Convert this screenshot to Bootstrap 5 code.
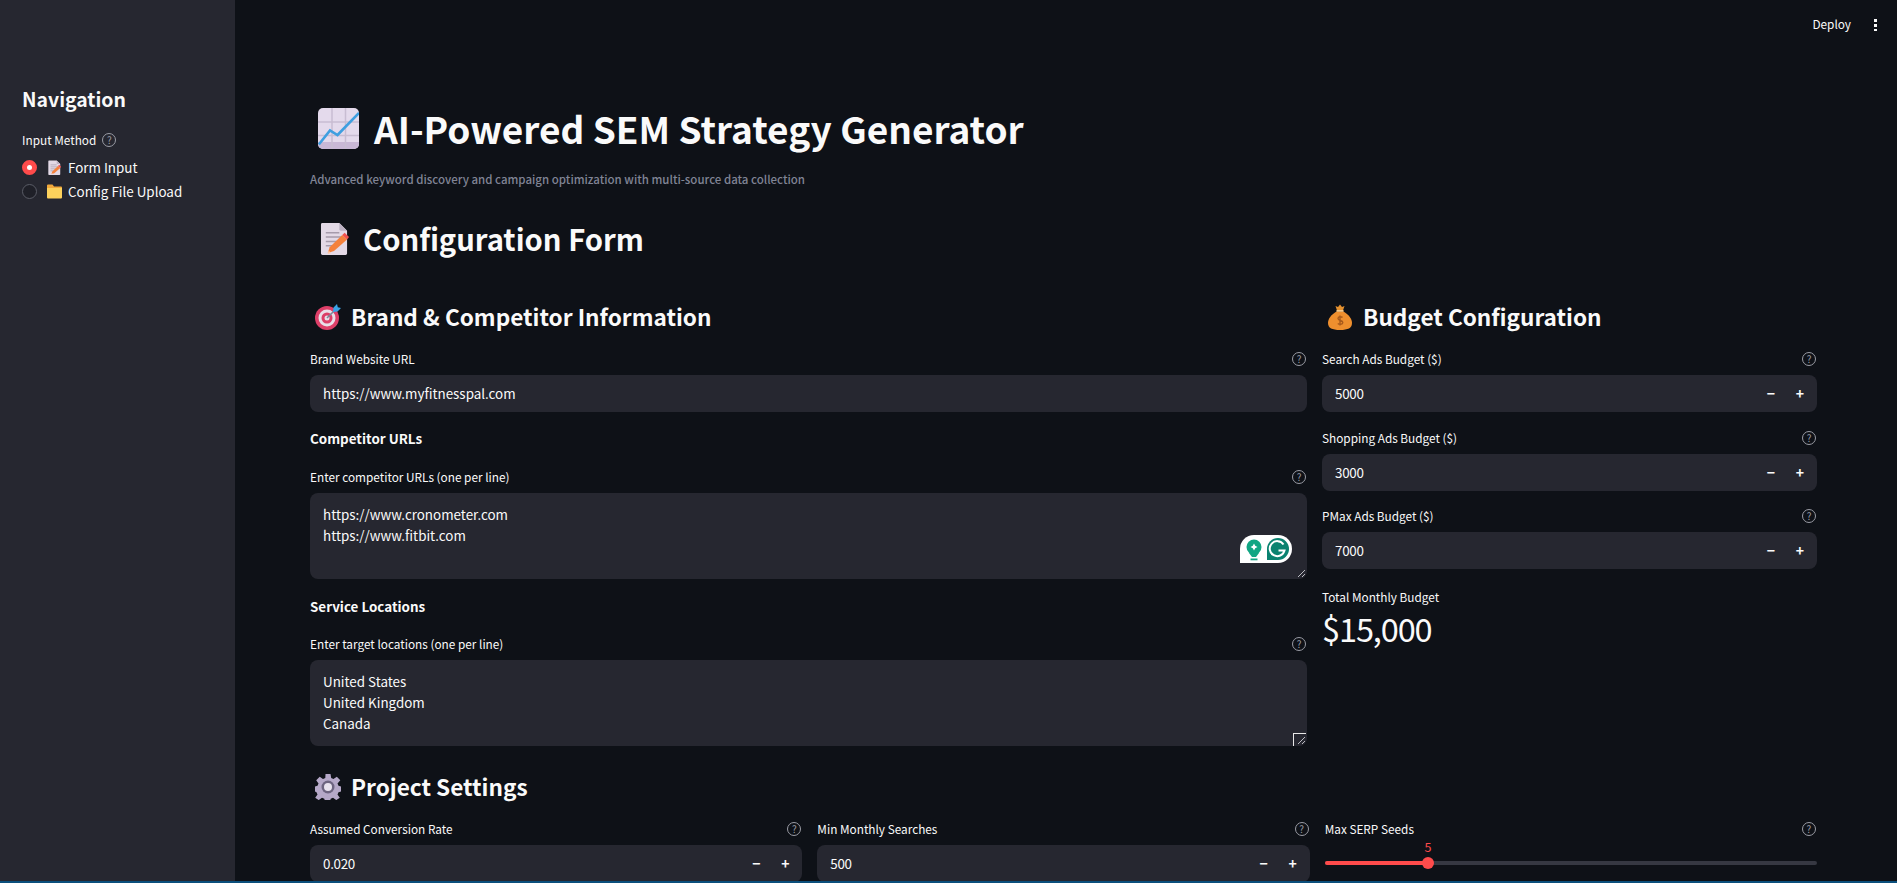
<!DOCTYPE html>
<html lang="en">
<head>
  <meta charset="UTF-8">
  <meta name="viewport" content="width=device-width, initial-scale=1">
  <title>AI-Powered SEM Strategy Generator</title>
  <link href="https://cdn.jsdelivr.net/npm/bootstrap@5.3.3/dist/css/bootstrap.min.css" rel="stylesheet">
  <style>
    html, body { height: 883px; overflow: hidden; }
    body {
      background: #0e1117;
      color: #fafafa;
      font-family: "Noto Sans CJK SC", "Noto Sans", sans-serif;
      font-size: 13.4px;
    }
    .app-shell { height: 881px; overflow: hidden; }
    .side-panel { width: 235px; background: #262730; padding: 85px 22px 0; flex: none; }
    .side-title { font-size: 19.4px; font-weight: 700; line-height: 28px; margin: 0 0 18px; }
    .side-label { font-size: 11.8px; line-height: 18px; margin-bottom: 6px; gap: 6px; }
    .radio-row { height: 24px; gap: 6px; font-size: 13.4px; }
    .radio-dot { width: 15px; height: 15px; border-radius: 50%; border: 1px solid #5a5c66; background: #1f2028; flex: none; }
    .radio-dot.is-on { background: #ff4b4b; border: 5px solid #ff4b4b; position: relative; }
    .radio-dot.is-on::after { content: ""; position: absolute; inset: 0; background: #fff; border-radius: 50%; }
    .radio-emoji { width: 15px; height: 15px; flex: none; }
    .main-panel { flex: 1; padding: 0 80px 0 75px; min-width: 0; position: relative; }
    .top-actions { position: absolute; top: 14px; right: 20px; gap: 23px; height: 20px; font-size: 11.8px; }
    .kebab { width: 3px; height: 13px; background: radial-gradient(circle, #fafafa 1.5px, transparent 1.7px) 0 0 / 3px 5px; }
    .page-title { font-size: 37px; font-weight: 700; line-height: 56px; margin: 100px 0 0 8px; gap: 15px; height: 56px; }
    .page-title svg { width: 41px; height: 41px; }
    .page-sub { color: #808495; font-size: 11.5px; font-weight: 500; line-height: 18px; margin: 14px 0 0; }
    .form-title { font-size: 29.2px; font-weight: 700; line-height: 44px; margin: 28px 0 0 10px; gap: 14px; }
    .form-title svg { width: 29px; height: 33px; }
    .sect-title { font-size: 22.6px; font-weight: 700; line-height: 34px; margin: 0 0 0 5px; gap: 10px; height: 34px; }
    .sect-title svg { width: 26px; height: 26px; }
    .cols-main { gap: 15px; margin-top: 40px; }
    .col-wide { width: 997px; flex: none; }
    .col-narrow { flex: 1; min-width: 0; }
    .cols-three { gap: 15px; margin-top: 16px; }
    .cols-three > div { flex: 1; min-width: 0; }
    .fld-label { font-size: 11.8px; line-height: 18px; height: 18px; margin-bottom: 7px; }
    .fld-first { margin-top: 16px; }
    .fld-gap16 { margin-top: 16px; }
    .fld-gap17 { margin-top: 17px; }
    .fld-gap19 { margin-top: 19px; }
    .fld-gap20 { margin-top: 20px; }
    .help-mark {
      width: 14px; height: 14px; border-radius: 50%; border: 1px solid #9a9ca5; color: #9a9ca5;
      font-size: 10px; line-height: 12px; text-align: center; flex: none; margin-right: 1px;
    }
    .form-control.dark-field, .form-control.dark-field:focus {
      background: #262730; color: #fafafa; border: 0; box-shadow: none; border-radius: 8px;
      font-size: 13.4px; height: 37px; padding: 0 13px 2px; font-family: inherit;
    }
    textarea.form-control.dark-field, textarea.form-control.dark-field:focus {
      height: 86px; line-height: 21px; padding: 11px 13px; resize: none; overflow: hidden; min-height: 0;
    }
    .stepper { background: #262730; border-radius: 8px; height: 37px; }
    .stepper .form-control.dark-field { background: transparent; letter-spacing: -.3px; }
    .step-btn { width: 30px; padding: 0; color: #fafafa; border: 0; font-size: 14px; font-weight: 700; line-height: 37px; flex: none; }
    .step-last { margin-right: 2px; }
    .bold-label { font-size: 13.4px; font-weight: 700; line-height: 20px; }
    .field-wrap { position: relative; }
    .gram-badge { position: absolute; left: 930px; bottom: 16px; width: 52px; height: 28px; }
    .grip { position: absolute; right: 2px; bottom: 2px; width: 8px; height: 8px; }
    .corner-mark { position: absolute; right: 1px; bottom: 0; width: 13px; height: 13px; border-left: 1px solid #e8e8e8; border-top: 1px solid #e8e8e8; }
    .metric-value { font-size: 32.5px; line-height: 44px; letter-spacing: -1.1px; }
    .slider-box { height: 37px; position: relative; }
    .slider-track { position: absolute; left: 0; right: 0; top: 16px; height: 4px; border-radius: 2px; background: #363842; }
    .slider-fill { position: absolute; left: 0; top: 16px; height: 4px; border-radius: 2px; background: #ff4b4b; }
    .slider-thumb { position: absolute; top: 12px; width: 12px; height: 12px; margin-left: -6px; border-radius: 50%; background: #ff4b4b; }
    .slider-val { position: absolute; top: -7px; width: 20px; margin-left: -10px; text-align: center; color: #ff4b4b; font-size: 12.6px; line-height: 18px; }
    .status-strip { height: 2px; background: #0b4f7c; }
  </style>
</head>
<body>
  <!-- emoji drawings -->
  <svg width="0" height="0" class="position-absolute">
    <defs>
      <symbol id="ico-memo" viewBox="0 0 30 34">
        <path d="M1 2.5A1.5 1.5 0 0 1 2.500 1H20l8 8v23.500a1.500 1.500 0 0 1-1.500 1.500h-24A1.500 1.500 0 0 1 1 32.500z" fill="#e3d9e6"/>
        <path d="M20 1l8 8h-6.500A1.500 1.500 0 0 1 20 7.500z" fill="#bdb2c4"/>
        <path d="M6 11h14M6 15.500h17M6 20h13M6 24.500h9" stroke="#a69bab" stroke-width="1.500"/>
        <path d="M8 32l2-6L23 13.500l5 4.500L14.500 30z" fill="#f4813c"/>
        <path d="M23 13.500l2.500-2.500 4.500 4.500-2 2.500z" fill="#f0524f"/>
        <path d="M8 33l.8-3.500 2.700 2.400z" fill="#ffc9a8"/>
      </symbol>
      <symbol id="ico-chart" viewBox="0 0 41 41">
        <rect width="41" height="41" rx="5" fill="#e4daec"/>
        <path d="M0 36a5 5 0 0 0 5 5h31a5 5 0 0 0 5-5v-2H0z" fill="#c9b8d6"/>
        <path d="M14 0v41M27.500 0v41M0 14h41M0 27.500h41" stroke="#c8bdd2" stroke-width="1.500"/>
        <path d="M.8 36.500L12 22.500l7.500 4.500L41 5" fill="none" stroke="#3f9fe0" stroke-width="2.600"/>
      </symbol>
      <symbol id="ico-target" viewBox="0 0 26 26">
        <circle cx="12" cy="14" r="12" fill="#dd3f68"/>
        <circle cx="12" cy="14" r="8.500" fill="#e9dfe8"/>
        <circle cx="12" cy="14" r="5.500" fill="#dd3f68"/>
        <circle cx="12" cy="14" r="2.500" fill="#e9dfe8"/>
        <path d="M12 14L20 6" stroke="#7b8798" stroke-width="1.600"/>
        <path d="M18 8l.5-4.500L22 0l.8 3.200L26 4l-3.500 3.500z" fill="#39a3e6"/>
      </symbol>
      <symbol id="ico-money" viewBox="0 0 24 26">
        <path d="M7.500 2l2.500 1 2-2.500 2 2.500 2.500-1-1.500 4.500h-6z" fill="#e4912f"/>
        <path d="M8.500 7.500h7c5 3 8.500 7 8.500 11.500 0 5-4 7-12 7S0 24 0 19C0 14.500 3.500 10.500 8.500 7.500z" fill="#ee8f2e"/>
        <path d="M8.500 6h7v1.800h-7z" fill="#f9c987"/>
        <path d="M14.500 13.500c-.8-1-4.500-1.200-4.500 1 0 2.500 4.800 1.500 4.800 4 0 2.200-3.800 2-5 .9M12 11.500v10" fill="none" stroke="#a85a1b" stroke-width="1.400"/>
      </symbol>
      <symbol id="ico-gear" viewBox="0 0 26 26">
        <path d="M10.500 0h5l.7 4 2.300 1 3.300-2.300 3.500 3.500L22.500 9.500l1 2.300 2.500.7v5l-2.500.7-1 2.300 2.300 3.300-3.500 2.300-3.300-2.300-2.300 1-.7 2.200h-5l-.7-2.200-2.300-1-3.300 2.300-3.500-2.300 2.300-3.300-1-2.300L0 17.500v-5l2.500-.7 1-2.300L1.200 6.200l3.500-3.500L8 5l2.300-1z" fill="#b5a8c8"/>
        <circle cx="13" cy="13" r="6.500" fill="#6d6480"/>
        <circle cx="13" cy="13" r="4" fill="#e8e2ee"/>
      </symbol>
      <symbol id="ico-folder" viewBox="0 0 15 14">
        <path d="M0 1a1 1 0 0 1 1-1h4.500L7 2h7a1 1 0 0 1 1 1v2H0z" fill="#f2a93b"/>
        <path d="M0 3.500h15V13a1 1 0 0 1-1 1H1a1 1 0 0 1-1-1z" fill="#fdd25c"/>
      </symbol>
    </defs>
  </svg>

  <div class="app-shell d-flex">
    <!-- Sidebar -->
    <div class="side-panel">
      <h2 class="side-title">Navigation</h2>
      <div class="side-label d-flex align-items-center">Input Method <span class="help-mark">?</span></div>
      <div class="radio-row d-flex align-items-center">
        <span class="radio-dot is-on"></span>
        <svg class="radio-emoji ms-1"><use href="#ico-memo"/></svg>
        <span>Form Input</span>
      </div>
      <div class="radio-row d-flex align-items-center">
        <span class="radio-dot"></span>
        <svg class="radio-emoji ms-1"><use href="#ico-folder"/></svg>
        <span>Config File Upload</span>
      </div>
    </div>

    <!-- Main -->
    <div class="main-panel">
      <div class="top-actions d-flex align-items-center">
        <span>Deploy</span>
        <span class="kebab"></span>
      </div>

      <h1 class="page-title d-flex align-items-center">
        <svg><use href="#ico-chart"/></svg>
        <span>AI-Powered SEM Strategy Generator</span>
      </h1>
      <p class="page-sub">Advanced keyword discovery and campaign optimization with multi-source data collection</p>
      <h2 class="form-title d-flex align-items-center">
        <svg><use href="#ico-memo"/></svg>
        <span>Configuration Form</span>
      </h2>

      <div class="cols-main d-flex">
        <div class="col-wide">
          <h3 class="sect-title d-flex align-items-center">
            <svg><use href="#ico-target"/></svg>
            <span>Brand &amp; Competitor Information</span>
          </h3>
          <div class="fld-label fld-first d-flex justify-content-between align-items-center"><span>Brand Website URL</span><span class="help-mark">?</span></div>
          <input class="form-control dark-field" type="text" value="https://www.myfitnesspal.com">
          <div class="bold-label fld-gap16">Competitor URLs</div>
          <div class="fld-label fld-gap20 d-flex justify-content-between align-items-center"><span>Enter competitor URLs (one per line)</span><span class="help-mark">?</span></div>
          <div class="field-wrap">
            <textarea class="form-control dark-field">https://www.cronometer.com
https://www.fitbit.com</textarea>
            <svg class="gram-badge" viewBox="0 0 52 28">
              <path d="M0 14A14 14 0 0 1 14 0h24a14 14 0 0 1 0 28H0z" fill="#fff"/>
              <circle cx="14" cy="12" r="7.500" fill="#11a683"/>
              <path d="M9 18l3 4h4l3-4z" fill="#11a683"/>
              <path d="M10.500 23.500h7v1.800h-7z" fill="#11a683"/>
              <path d="M14 8.500l1.200 2.300 2.300 1.200-2.300 1.200-1.200 2.300-1.200-2.300-2.300-1.200 2.300-1.200z" fill="#fff"/>
              <path d="M27 25V14A11 11 0 0 1 38 3a11 11 0 0 1 0 22z" fill="#0a8270"/>
              <path d="M43.500 9.500a7.500 7.500 0 1 0 1 6h-6" fill="none" stroke="#fff" stroke-width="2"/>
            </svg>
            <svg class="grip" viewBox="0 0 8 8"><path d="M1 8l7-7M5 8l3-3" stroke="#b9bac0" stroke-width="1"/></svg>
          </div>
          <div class="bold-label fld-gap17">Service Locations</div>
          <div class="fld-label fld-gap19 d-flex justify-content-between align-items-center"><span>Enter target locations (one per line)</span><span class="help-mark">?</span></div>
          <div class="field-wrap">
            <textarea class="form-control dark-field">United States
United Kingdom
Canada</textarea>
            <span class="corner-mark"></span>
            <svg class="grip" viewBox="0 0 8 8"><path d="M1 8l7-7M5 8l3-3" stroke="#b9bac0" stroke-width="1"/></svg>
          </div>
        </div>

        <div class="col-narrow">
          <h3 class="sect-title d-flex align-items-center">
            <svg viewBox="0 0 24 26"><use href="#ico-money"/></svg>
            <span>Budget Configuration</span>
          </h3>
          <div class="fld-label fld-first d-flex justify-content-between align-items-center"><span>Search Ads Budget ($)</span><span class="help-mark">?</span></div>
          <div class="stepper input-group">
            <input class="form-control dark-field" type="text" value="5000">
            <span class="step-btn text-center">&minus;</span><span class="step-btn step-last text-center">+</span>
          </div>
          <div class="fld-label fld-gap17 d-flex justify-content-between align-items-center"><span>Shopping Ads Budget ($)</span><span class="help-mark">?</span></div>
          <div class="stepper input-group">
            <input class="form-control dark-field" type="text" value="3000">
            <span class="step-btn text-center">&minus;</span><span class="step-btn step-last text-center">+</span>
          </div>
          <div class="fld-label fld-gap16 d-flex justify-content-between align-items-center"><span>PMax Ads Budget ($)</span><span class="help-mark">?</span></div>
          <div class="stepper input-group">
            <input class="form-control dark-field" type="text" value="7000">
            <span class="step-btn text-center">&minus;</span><span class="step-btn step-last text-center">+</span>
          </div>
          <div class="fld-label fld-gap19 mb-0">Total Monthly Budget</div>
          <div class="metric-value">$15,000</div>
        </div>
      </div>

      <h3 class="sect-title d-flex align-items-center mt-4">
        <svg><use href="#ico-gear"/></svg>
        <span>Project Settings</span>
      </h3>
      <div class="cols-three d-flex">
        <div>
          <div class="fld-label d-flex justify-content-between align-items-center"><span>Assumed Conversion Rate</span><span class="help-mark">?</span></div>
          <div class="stepper input-group">
            <input class="form-control dark-field" type="text" value="0.020">
            <span class="step-btn text-center">&minus;</span><span class="step-btn step-last text-center">+</span>
          </div>
        </div>
        <div>
          <div class="fld-label d-flex justify-content-between align-items-center"><span>Min Monthly Searches</span><span class="help-mark">?</span></div>
          <div class="stepper input-group">
            <input class="form-control dark-field" type="text" value="500">
            <span class="step-btn text-center">&minus;</span><span class="step-btn step-last text-center">+</span>
          </div>
        </div>
        <div>
          <div class="fld-label d-flex justify-content-between align-items-center"><span>Max SERP Seeds</span><span class="help-mark">?</span></div>
          <div class="slider-box">
            <div class="slider-track"></div>
            <div class="slider-fill" style="width: 21%"></div>
            <div class="slider-thumb" style="left: 21%"></div>
            <div class="slider-val" style="left: 21%">5</div>
          </div>
        </div>
      </div>
    </div>
  </div>
  <div class="status-strip"></div>
  <script src="https://cdn.jsdelivr.net/npm/bootstrap@5.3.3/dist/js/bootstrap.bundle.min.js"></script>
</body>
</html>
